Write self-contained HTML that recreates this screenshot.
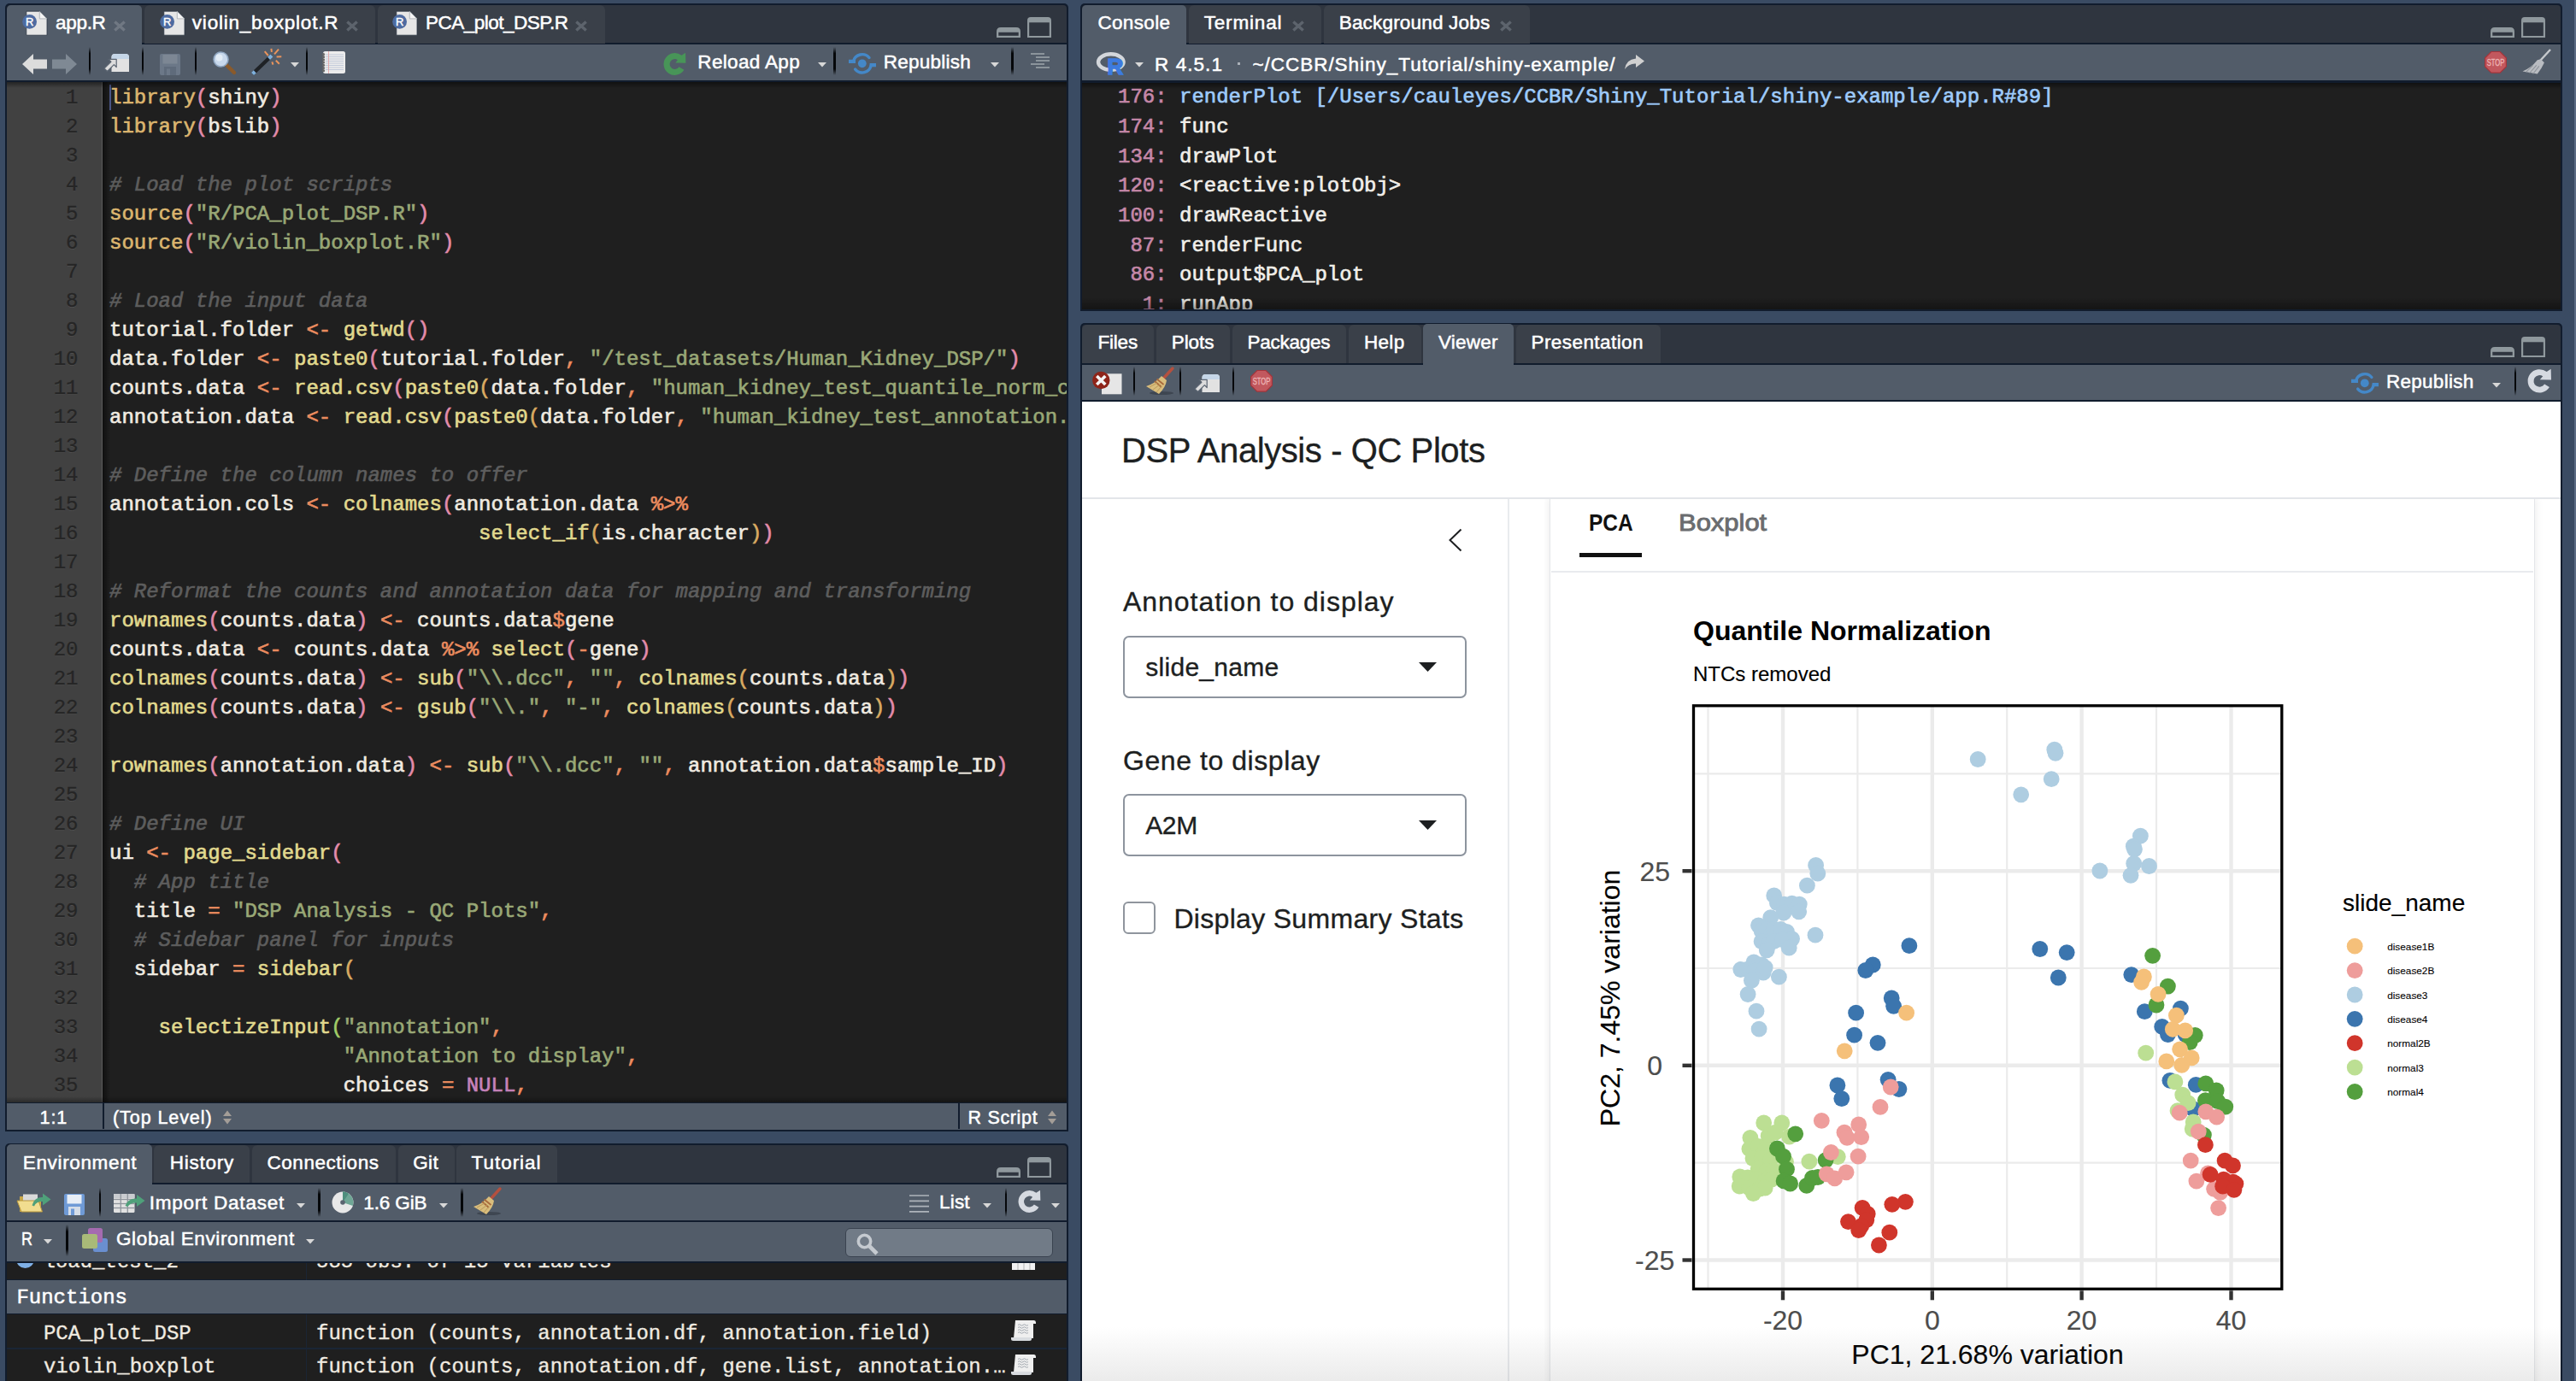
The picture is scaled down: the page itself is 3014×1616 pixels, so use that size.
<!DOCTYPE html>
<html><head><meta charset="utf-8"><title>RStudio</title><style>
html,body{margin:0;padding:0}
body{width:3014px;height:1616px;overflow:hidden;background:#3a4b63;position:relative;font-family:"Liberation Sans",sans-serif}
.t{position:absolute;white-space:pre;display:block;-webkit-text-stroke:.35px}
svg{position:absolute;overflow:visible}
.code{position:absolute;font:24px/34px "Liberation Mono",monospace;white-space:pre;color:#f0ebe1;-webkit-text-stroke:.65px}
.code i{font-style:italic;color:#5d5d5d}
.code b{font-weight:400}
.k{color:#dbb56f}.f{color:#e1d98e}.s{color:#99a876}.o{color:#ec8c5f}.p1{color:#e38cab}.p2{color:#d9aa62}.p3{color:#a0cc68}.n{color:#c682ba}.e{color:#99a876}
.ln{position:absolute;font:24px/34px "Liberation Mono",monospace;white-space:pre;color:#252525;text-align:right;-webkit-text-stroke:.3px;text-shadow:0 1px 0 rgba(255,255,255,.09)}
</style></head><body>
<div style="position:absolute;left:6.2px;top:4.0px;width:1243.6px;height:1319.6px;background:#111c2d;border-radius:5px 5px 0 0;"></div>
<div style="position:absolute;left:7.8px;top:6.0px;width:1240.0px;height:46.2px;background:#2f353f;border-radius:4px 4px 0 0;"></div>
<div style="position:absolute;left:7.8px;top:50.2px;width:1240.0px;height:2.5px;background:#111c2d;"></div>
<div style="position:absolute;left:7.8px;top:5.5px;width:158.7px;height:49.2px;background:#525c69;border-radius:5px 5px 0 0;"></div>
<div style="position:absolute;left:169.0px;top:6.0px;width:269.5px;height:44.7px;background:#3a4049;border-radius:6px 6px 0 0;"></div>
<div style="position:absolute;left:441.5px;top:6.0px;width:266.0px;height:44.7px;background:#3a4049;border-radius:6px 6px 0 0;"></div>
<div style="position:absolute;left:7.8px;top:52.2px;width:1240.0px;height:41.8px;background:#525c69;"></div>
<div style="position:absolute;left:7.8px;top:96.0px;width:1240.5px;height:1194.0px;background:#1f1f1f;"></div>
<div style="position:absolute;left:7.8px;top:96.0px;width:112.6px;height:1194.0px;background:#414141;border-right:1px solid #5a5a5a;box-sizing:border-box;"></div>
<div style="position:absolute;left:120.4px;top:96.0px;width:9.0px;height:1194.0px;background:linear-gradient(90deg,rgba(0,0,0,.5),rgba(0,0,0,0));"></div>
<div style="position:absolute;left:9px;top:96.5px;width:1239.300px;height:1193.5px;overflow:hidden"><div class="ln" style="left:0;top:1px;width:82.500px">1
2
3
4
5
6
7
8
9
10
11
12
13
14
15
16
17
18
19
20
21
22
23
24
25
26
27
28
29
30
31
32
33
34
35</div><div class="code" style="left:119px;top:1px"><b class="k">library</b><b class="p1">(</b>shiny<b class="p1">)</b>
<b class="k">library</b><b class="p1">(</b>bslib<b class="p1">)</b>

<i># Load the plot scripts</i>
<b class="k">source</b><b class="p1">(</b><b class="s">"R/PCA_plot_DSP.R"</b><b class="p1">)</b>
<b class="k">source</b><b class="p1">(</b><b class="s">"R/violin_boxplot.R"</b><b class="p1">)</b>

<i># Load the input data</i>
tutorial.folder <b class="o">&lt;-</b> <b class="f">getwd</b><b class="p1">(</b><b class="p1">)</b>
data.folder <b class="o">&lt;-</b> <b class="f">paste0</b><b class="p1">(</b>tutorial.folder<b class="o">,</b> <b class="s">"/test_datasets/Human_Kidney_DSP/"</b><b class="p1">)</b>
counts.data <b class="o">&lt;-</b> <b class="f">read.csv</b><b class="p1">(</b><b class="f">paste0</b><b class="p2">(</b>data.folder<b class="o">,</b> <b class="s">"human_kidney_test_quantile_norm_counts.csv"</b><b class="p2">)</b><b class="p1">)</b>
annotation.data <b class="o">&lt;-</b> <b class="f">read.csv</b><b class="p1">(</b><b class="f">paste0</b><b class="p2">(</b>data.folder<b class="o">,</b> <b class="s">"human_kidney_test_annotation.csv"</b><b class="p2">)</b><b class="p1">)</b>

<i># Define the column names to offer</i>
annotation.cols <b class="o">&lt;-</b> <b class="f">colnames</b><b class="p1">(</b>annotation.data <b class="o">%&gt;%</b>
                              <b class="f">select_if</b><b class="p2">(</b>is.character<b class="p2">)</b><b class="p1">)</b>

<i># Reformat the counts and annotation data for mapping and transforming</i>
<b class="f">rownames</b><b class="p1">(</b>counts.data<b class="p1">)</b> <b class="o">&lt;-</b> counts.data<b class="o">$</b>gene
counts.data <b class="o">&lt;-</b> counts.data <b class="o">%&gt;%</b> <b class="f">select</b><b class="p1">(</b><b class="o">-</b>gene<b class="p1">)</b>
<b class="f">colnames</b><b class="p1">(</b>counts.data<b class="p1">)</b> <b class="o">&lt;-</b> <b class="f">sub</b><b class="p1">(</b><b class="s">"</b><b class="e">\\</b><b class="s">.dcc"</b><b class="o">,</b> <b class="s">""</b><b class="o">,</b> <b class="f">colnames</b><b class="p2">(</b>counts.data<b class="p2">)</b><b class="p1">)</b>
<b class="f">colnames</b><b class="p1">(</b>counts.data<b class="p1">)</b> <b class="o">&lt;-</b> <b class="f">gsub</b><b class="p1">(</b><b class="s">"</b><b class="e">\\</b><b class="s">."</b><b class="o">,</b> <b class="s">"-"</b><b class="o">,</b> <b class="f">colnames</b><b class="p2">(</b>counts.data<b class="p2">)</b><b class="p1">)</b>

<b class="f">rownames</b><b class="p1">(</b>annotation.data<b class="p1">)</b> <b class="o">&lt;-</b> <b class="f">sub</b><b class="p1">(</b><b class="s">"</b><b class="e">\\</b><b class="s">.dcc"</b><b class="o">,</b> <b class="s">""</b><b class="o">,</b> annotation.data<b class="o">$</b>sample_ID<b class="p1">)</b>

<i># Define UI</i>
ui <b class="o">&lt;-</b> <b class="f">page_sidebar</b><b class="p1">(</b>
  <i># App title</i>
  title <b class="o">=</b> <b class="s">"DSP Analysis - QC Plots"</b><b class="o">,</b>
  <i># Sidebar panel for inputs</i>
  sidebar <b class="o">=</b> <b class="f">sidebar</b><b class="p2">(</b>

    <b class="f">selectizeInput</b><b class="p3">(</b><b class="s">"annotation"</b><b class="o">,</b>
                   <b class="s">"Annotation to display"</b><b class="o">,</b>
                   choices <b class="o">=</b> <b class="n">NULL</b><b class="o">,</b></div><div style="position:absolute;left:119px;top:2px;width:1.500px;height:30px;background:#4a5585"></div></div>
<div style="position:absolute;left:7.8px;top:96.0px;width:1240.5px;height:7.0px;background:linear-gradient(180deg,rgba(0,0,0,.45),rgba(0,0,0,0));"></div>
<div style="position:absolute;left:7.8px;top:1283.0px;width:1240.5px;height:7.0px;background:linear-gradient(180deg,rgba(0,0,0,0),rgba(0,0,0,.35));"></div>
<div style="position:absolute;left:7.8px;top:1290.0px;width:1240.5px;height:30.5px;background:#525c69;border-top:1.500px solid #111c2d;"></div>
<div style="position:absolute;left:120.0px;top:1291.0px;width:2.0px;height:30.0px;background:#111c2d;"></div>
<div style="position:absolute;left:1121.0px;top:1291.0px;width:2.0px;height:30.0px;background:#111c2d;"></div>
<span class="t" style="left:46.5px;top:1298.0px;font:normal 400 21.50px/1 'Liberation Sans',sans-serif;color:#ffffff;letter-spacing:0.970px;-webkit-text-stroke:.5px;">1:1</span>
<span class="t" style="left:132.0px;top:1298.0px;font:normal 400 21.50px/1 'Liberation Sans',sans-serif;color:#ffffff;letter-spacing:0.922px;-webkit-text-stroke:.5px;">(Top Level)</span>
<span class="t" style="left:1132.6px;top:1298.0px;font:normal 400 21.50px/1 'Liberation Sans',sans-serif;color:#ffffff;letter-spacing:0.654px;-webkit-text-stroke:.5px;">R Script</span>
<svg style="left:260.5px;top:1299.0px" width="10.0" height="17.0" viewBox="0 0 10 17"><path d="M0 7l5-6.500 5 6.500zM0 10l5 6.500 5-6.500z" fill="#a39d97"/></svg>
<svg style="left:1226.0px;top:1299.0px" width="10.0" height="17.0" viewBox="0 0 10 17"><path d="M0 7l5-6.500 5 6.500zM0 10l5 6.500 5-6.500z" fill="#a39d97"/></svg>
<svg style="left:26.0px;top:12.0px" width="30.0" height="33.0" viewBox="0 0 30 33"><path d="M4.800 1.200h15.500l8.700 8.700v19.300H4.800z" fill="#e6e6e6" stroke="#2c3644" stroke-width=".8"/><path d="M20.300 1.200v8.700h8.700z" fill="#f4f4f4" stroke="#9aa0a8" stroke-width=".7"/><circle cx="8.600" cy="13.400" r="8.400" fill="#4d6ba1"/><text x="8.600" y="18" font-family="Liberation Sans,sans-serif" font-weight="400" font-size="13" fill="#fff" stroke="#fff" stroke-width=".4" text-anchor="middle">R</text></svg>
<span class="t" style="left:65.1px;top:16.0px;font:normal 400 22.50px/1 'Liberation Sans',sans-serif;color:#ffffff;letter-spacing:-0.329px;-webkit-text-stroke:.5px;">app.R</span>
<svg style="left:133.2px;top:24.9px" width="14.0" height="11.0" viewBox="0 0 14 11"><path d="M1.300 0.500l11.400 10M12.700 0.500L1.300 10.500" stroke="#707883" stroke-width="3.400" stroke-linecap="butt"/></svg>
<svg style="left:187.0px;top:12.0px" width="30.0" height="33.0" viewBox="0 0 30 33"><path d="M4.800 1.200h15.500l8.700 8.700v19.300H4.800z" fill="#e6e6e6" stroke="#2c3644" stroke-width=".8"/><path d="M20.300 1.200v8.700h8.700z" fill="#f4f4f4" stroke="#9aa0a8" stroke-width=".7"/><circle cx="8.600" cy="13.400" r="8.400" fill="#4d6ba1"/><text x="8.600" y="18" font-family="Liberation Sans,sans-serif" font-weight="400" font-size="13" fill="#fff" stroke="#fff" stroke-width=".4" text-anchor="middle">R</text></svg>
<span class="t" style="left:224.8px;top:16.0px;font:normal 400 22.50px/1 'Liberation Sans',sans-serif;color:#ffffff;letter-spacing:0.791px;-webkit-text-stroke:.5px;">violin_boxplot.R</span>
<svg style="left:405.2px;top:24.9px" width="14.0" height="11.0" viewBox="0 0 14 11"><path d="M1.300 0.500l11.400 10M12.700 0.500L1.300 10.500" stroke="#5d646d" stroke-width="3.400" stroke-linecap="butt"/></svg>
<svg style="left:459.0px;top:12.0px" width="30.0" height="33.0" viewBox="0 0 30 33"><path d="M4.800 1.200h15.500l8.700 8.700v19.300H4.800z" fill="#e6e6e6" stroke="#2c3644" stroke-width=".8"/><path d="M20.300 1.200v8.700h8.700z" fill="#f4f4f4" stroke="#9aa0a8" stroke-width=".7"/><circle cx="8.600" cy="13.400" r="8.400" fill="#4d6ba1"/><text x="8.600" y="18" font-family="Liberation Sans,sans-serif" font-weight="400" font-size="13" fill="#fff" stroke="#fff" stroke-width=".4" text-anchor="middle">R</text></svg>
<span class="t" style="left:498.0px;top:16.0px;font:normal 400 22.50px/1 'Liberation Sans',sans-serif;color:#ffffff;letter-spacing:-0.503px;-webkit-text-stroke:.5px;">PCA_plot_DSP.R</span>
<svg style="left:672.7px;top:24.9px" width="14.0" height="11.0" viewBox="0 0 14 11"><path d="M1.300 0.500l11.400 10M12.700 0.500L1.300 10.500" stroke="#5d646d" stroke-width="3.400" stroke-linecap="butt"/></svg>
<svg style="left:1165.5px;top:20.0px" width="66.0" height="26.0" viewBox="0 0 66 26"><path d="M0 24v-7q0-5 5-5h18q5 0 5 5v7z" fill="#8f989d"/><rect x="2.300" y="17.800" width="23.400" height="4" fill="#2f353f"/><path d="M36 24V4q0-4 4-4h20q4 0 4 4v20z" fill="#8f989d"/><rect x="38.200" y="6.300" width="23.600" height="15.700" fill="#2f353f"/></svg>
<svg style="left:26.3px;top:62.5px" width="29.0" height="24.0" viewBox="0 0 29 24"><path d="M0 12L13 0v6.5h16v11H13V24z" fill="#dcdcdc"/></svg>
<svg style="left:61.2px;top:62.5px" width="29.0" height="24.0" viewBox="0 0 29 24"><path d="M29 12L16 0v6.5H0v11h16V24z" fill="#7f8994"/></svg>
<div style="position:absolute;left:103.8px;top:55.0px;width:2.4px;height:33.0px;background:linear-gradient(180deg,rgba(0,0,0,0),#05070a 22%,#05070a 78%,rgba(0,0,0,0))"></div>
<svg style="left:121.7px;top:63.4px" width="29.0" height="21.0" viewBox="0 0 29 21"><path d="M8.500 21V4q0-4 4-4h12.500q4 0 4 4v17z" fill="#e2e2e2"/><path d="M8.500 6V4q0-4 4-4h12.500q4 0 4 4v2z" fill="#c5d6e8"/><path d="M14.200 6.300H5l2.900 2.900L0 17l3.500 3.500 7.900-7.900 2.800 2.900z" fill="#dcdcdc" stroke="#5b6572" stroke-width="1.200" stroke-linejoin="round"/></svg>
<div style="position:absolute;left:165.7px;top:55.0px;width:2.4px;height:33.0px;background:linear-gradient(180deg,rgba(0,0,0,0),#05070a 22%,#05070a 78%,rgba(0,0,0,0))"></div>
<svg style="left:187.2px;top:62.8px" width="24.0" height="25.0" viewBox="0 0 24 25"><rect x="0" y="0" width="24" height="25" rx="2" fill="#6c7888"/><rect x="3.5" y="1" width="17" height="10.5" fill="#7d8794"/><rect x="5" y="15" width="14" height="10" fill="#5f6b7b"/><rect x="8" y="17.5" width="4" height="7.5" fill="#6c7888"/></svg>
<div style="position:absolute;left:227.8px;top:55.0px;width:2.4px;height:33.0px;background:linear-gradient(180deg,rgba(0,0,0,0),#05070a 22%,#05070a 78%,rgba(0,0,0,0))"></div>
<svg style="left:248.5px;top:60.0px" width="28.0" height="28.0" viewBox="0 0 28 28"><path d="M15 15l10 10" stroke="#8a5a2b" stroke-width="4.5" stroke-linecap="round"/><circle cx="9.5" cy="9.5" r="8.5" fill="#c9d9ec" stroke="#8fa6c0" stroke-width="1.6"/><circle cx="7.5" cy="7.5" r="4" fill="#eaf1f9" opacity=".8"/></svg>
<svg style="left:293.5px;top:56.5px" width="36.0" height="32.0" viewBox="0 0 36 32"><path d="M1.500 29.500L24 8" stroke="#1f2226" stroke-width="4.400" stroke-linecap="butt"/><path d="M1.500 29.500l2.800-2.700" stroke="#7fb0dc" stroke-width="4.400"/><path d="M20.500 11.300L24 8" stroke="#7fb0dc" stroke-width="4.400"/><g stroke="#e9945c" stroke-width="2"><path d="M15.700 3.100L19.800 8M23.400 -0.200L23.900 3.900M32 0.600L27.100 6.300M35.300 9.300L29.600 9.600M32.800 17.700L28.800 13.700M25.500 18.600L24.300 15.300"/></g></svg>
<svg style="left:339.7px;top:73.2px" width="10.0" height="5.5" viewBox="0 0 10 5.5"><path d="M0 0h10 l-5 5.5 z" fill="#d8d8d8"/></svg>
<div style="position:absolute;left:357.7px;top:55.0px;width:2.4px;height:33.0px;background:linear-gradient(180deg,rgba(0,0,0,0),#05070a 22%,#05070a 78%,rgba(0,0,0,0))"></div>
<svg style="left:375.8px;top:60.4px" width="28.0" height="26.0" viewBox="0 0 28 26"><rect x="2" y="0" width="26" height="26" rx="2.5" fill="#ececec"/><path d="M5 4 h21" stroke="#b7c2d6" stroke-width=".8"/><path d="M5 6.5 h21" stroke="#b7c2d6" stroke-width=".8"/><path d="M5 9 h21" stroke="#b7c2d6" stroke-width=".8"/><path d="M5 11.5 h21" stroke="#b7c2d6" stroke-width=".8"/><path d="M5 14 h21" stroke="#b7c2d6" stroke-width=".8"/><path d="M5 16.5 h21" stroke="#b7c2d6" stroke-width=".8"/><path d="M5 19 h21" stroke="#b7c2d6" stroke-width=".8"/><path d="M5 21.5 h21" stroke="#b7c2d6" stroke-width=".8"/><path d="M8.500 0v26" stroke="#e3a0a0" stroke-width=".8"/><circle cx="2.5" cy="3.5" r="1.6" fill="#666"/><circle cx="2.5" cy="6.7" r="1.6" fill="#666"/><circle cx="2.5" cy="9.9" r="1.6" fill="#666"/><circle cx="2.5" cy="13.1" r="1.6" fill="#666"/><circle cx="2.5" cy="16.3" r="1.6" fill="#666"/><circle cx="2.5" cy="19.5" r="1.6" fill="#666"/><circle cx="2.5" cy="22.7" r="1.6" fill="#666"/></svg>
<svg style="left:776.2px;top:61.3px" width="27.3" height="27.3" viewBox="0 0 29 29"><path d="M22.72 4.06A13.7 13.7 0 1 0 25.91 22.12L19.6 18.2A6.25 6.25 0 1 1 17.9 9.75L15.2 13.23L27.98 13.56L27.65 .68Z" fill="#489558"/></svg>
<span class="t" style="left:816.3px;top:61.7px;font:normal 400 22.50px/1 'Liberation Sans',sans-serif;color:#ffffff;letter-spacing:0.334px;-webkit-text-stroke:.5px;">Reload App</span>
<svg style="left:956.5px;top:73.2px" width="10.0" height="5.5" viewBox="0 0 10 5.5"><path d="M0 0h10 l-5 5.5 z" fill="#d8d8d8"/></svg>
<div style="position:absolute;left:975.3px;top:55.0px;width:2.4px;height:33.0px;background:linear-gradient(180deg,rgba(0,0,0,0),#05070a 22%,#05070a 78%,rgba(0,0,0,0))"></div>
<svg style="left:993.0px;top:61.9px" width="32.0" height="24.2" viewBox="0 0 32 24.2"><circle cx="15.800" cy="12.300" r="4.900" fill="#4488c8"/><g fill="none" stroke="#4488c8" stroke-width="3.400" stroke-linecap="round"><path d="M5.450 10A10.600 10.600 0 0 1 23.920 5.490"/><path d="M26.150 14.600A10.600 10.600 0 0 1 7.680 19.110"/></g><path d="M0 7.800h8v4.300H0zM24.600 12.100H32v4.100h-7.400z" fill="#4488c8"/></svg>
<span class="t" style="left:1033.8px;top:61.7px;font:normal 400 22.50px/1 'Liberation Sans',sans-serif;color:#ffffff;letter-spacing:0.236px;-webkit-text-stroke:.5px;">Republish</span>
<svg style="left:1158.5px;top:73.2px" width="10.0" height="5.5" viewBox="0 0 10 5.5"><path d="M0 0h10 l-5 5.5 z" fill="#d8d8d8"/></svg>
<div style="position:absolute;left:1183.3px;top:55.0px;width:2.4px;height:33.0px;background:linear-gradient(180deg,rgba(0,0,0,0),#05070a 22%,#05070a 78%,rgba(0,0,0,0))"></div>
<svg style="left:1205.9px;top:62.0px" width="23.0" height="18.0" viewBox="0 0 23 18"><g stroke="#8b949b" stroke-width="2"><path d="M0 1h16M6 5h16M6 9h16M0 13h16M6 17h16"/></g></svg>
<div style="position:absolute;left:1264.3px;top:4.0px;width:1733.5px;height:359.5px;background:#111c2d;border-radius:5px 5px 0 0;"></div>
<div style="position:absolute;left:1266.3px;top:6.0px;width:1729.5px;height:46.2px;background:#2f353f;border-radius:4px 4px 0 0;"></div>
<div style="position:absolute;left:1266.3px;top:50.2px;width:1729.5px;height:2.5px;background:#111c2d;"></div>
<div style="position:absolute;left:1266.0px;top:5.5px;width:122.0px;height:49.2px;background:#525c69;border-radius:5px 5px 0 0;"></div>
<div style="position:absolute;left:1390.5px;top:6.0px;width:155.5px;height:44.7px;background:#3a4049;border-radius:6px 6px 0 0;"></div>
<div style="position:absolute;left:1548.5px;top:6.0px;width:241.5px;height:44.7px;background:#3a4049;border-radius:6px 6px 0 0;"></div>
<div style="position:absolute;left:1266.3px;top:52.2px;width:1729.5px;height:41.8px;background:#525c69;"></div>
<div style="position:absolute;left:1266.0px;top:96.5px;width:1729.9px;height:265.5px;background:#1f1f1f;"></div>
<div style="position:absolute;left:1266px;top:96.500px;width:1729.900px;height:265.500px;overflow:hidden"><div class="code" style="left:42px;top:0.800px;line-height:34.640px"><b style="color:#c587a8">176:</b><b style="color:#9ecbfb"> renderPlot [/Users/cauleyes/CCBR/Shiny_Tutorial/shiny-example/app.R#89]</b>
<b style="color:#c587a8">174:</b><b style="color:#f1efea"> func</b>
<b style="color:#c587a8">134:</b><b style="color:#f1efea"> drawPlot</b>
<b style="color:#c587a8">120:</b><b style="color:#f1efea"> &lt;reactive:plotObj&gt;</b>
<b style="color:#c587a8">100:</b><b style="color:#f1efea"> drawReactive</b>
<b style="color:#c587a8"> 87:</b><b style="color:#f1efea"> renderFunc</b>
<b style="color:#c587a8"> 86:</b><b style="color:#f1efea"> output$PCA_plot</b>
<b style="color:#c587a8">  1:</b><b style="color:#f1efea"> runApp</b></div></div>
<div style="position:absolute;left:1266.0px;top:96.5px;width:1729.9px;height:7.0px;background:linear-gradient(180deg,rgba(0,0,0,.45),rgba(0,0,0,0));"></div>
<div style="position:absolute;left:1266.0px;top:348.0px;width:1729.9px;height:14.0px;background:linear-gradient(180deg,rgba(0,0,0,0),rgba(0,0,0,.35));"></div>
<span class="t" style="left:1284.4px;top:16.0px;font:normal 400 22.50px/1 'Liberation Sans',sans-serif;color:#ffffff;letter-spacing:0.348px;-webkit-text-stroke:.5px;">Console</span>
<span class="t" style="left:1408.7px;top:16.0px;font:normal 400 22.50px/1 'Liberation Sans',sans-serif;color:#ffffff;letter-spacing:0.834px;-webkit-text-stroke:.5px;">Terminal</span>
<svg style="left:1512.0px;top:24.9px" width="14.0" height="11.0" viewBox="0 0 14 11"><path d="M1.300 0.500l11.400 10M12.700 0.500L1.300 10.500" stroke="#5d646d" stroke-width="3.400" stroke-linecap="butt"/></svg>
<span class="t" style="left:1566.7px;top:16.0px;font:normal 400 22.50px/1 'Liberation Sans',sans-serif;color:#ffffff;letter-spacing:0.189px;-webkit-text-stroke:.5px;">Background Jobs</span>
<svg style="left:1755.0px;top:24.9px" width="14.0" height="11.0" viewBox="0 0 14 11"><path d="M1.300 0.500l11.400 10M12.700 0.500L1.300 10.500" stroke="#5d646d" stroke-width="3.400" stroke-linecap="butt"/></svg>
<svg style="left:2914.0px;top:19.5px" width="66.0" height="26.0" viewBox="0 0 66 26"><path d="M0 24v-7q0-5 5-5h18q5 0 5 5v7z" fill="#8f989d"/><rect x="2.300" y="17.800" width="23.400" height="4" fill="#2f353f"/><path d="M36 24V4q0-4 4-4h20q4 0 4 4v20z" fill="#8f989d"/><rect x="38.200" y="6.300" width="23.600" height="15.700" fill="#2f353f"/></svg>
<svg style="left:1281.5px;top:59.5px" width="36.0" height="28.0" viewBox="0 0 36 28"><ellipse cx="17.800" cy="12.600" rx="14.800" ry="9.300" fill="none" stroke="#d3d6db" stroke-width="4.400"/><text x="13.500" y="27.300" font-family="Liberation Sans,sans-serif" font-weight="700" font-size="26" fill="#3d7be0" stroke="#3d7be0" stroke-width="1.500">R</text></svg>
<svg style="left:1327.8px;top:73.0px" width="10.0" height="5.5" viewBox="0 0 10 5.5"><path d="M0 0h10 l-5 5.5 z" fill="#d8d8d8"/></svg>
<span class="t" style="left:1351.0px;top:64.8px;font:normal 400 22.50px/1 'Liberation Sans',sans-serif;color:#ffffff;letter-spacing:1.065px;-webkit-text-stroke:.5px;">R 4.5.1</span>
<div style="position:absolute;left:1447.5px;top:72.5px;width:3.6px;height:3.6px;background:#aab0b8;"></div>
<span class="t" style="left:1465.4px;top:64.8px;font:normal 400 22.50px/1 'Liberation Sans',sans-serif;color:#ffffff;letter-spacing:0.976px;-webkit-text-stroke:.5px;">~/CCBR/Shiny_Tutorial/shiny-example/</span>
<svg style="left:1900.5px;top:63.5px" width="23.0" height="18.0" viewBox="0 0 23 18"><path d="M13 0l10 7.500L13 15v-4.500Q5 10 0 17 1.500 5.500 13 4.500z" fill="#d0d0d0"/></svg>
<svg style="left:2907.0px;top:59.5px" width="26.0" height="26.0" viewBox="0 0 26 26"><polygon points="7.86392,0.5 18.1361,0.5 25.4,7.70534 25.4,17.8947 18.1361,25.1 7.86392,25.1 0.6,17.8947 0.6,7.70534" fill="#c2585e" stroke="#a3343b" stroke-width="1.200"/><text x="13" y="16.800" font-family="Liberation Sans,sans-serif" font-size="10.500" fill="#efb9b9" stroke="#efb9b9" stroke-width=".3" text-anchor="middle" textLength="20.500" lengthAdjust="spacingAndGlyphs">STOP</text></svg>
<svg style="left:2948.5px;top:56.8px" width="37.5" height="30.5" viewBox="0 0 34 30"><path d="M33 1L21 14" stroke="#c6c9cd" stroke-width="2.400"/><path d="M22 12l4 4q-3 7-8 13L1 26q10-4 17-13z" fill="#b9bcc1"/><path d="M5 27l8-8M9 28l8-9M13 29l7-9" stroke="#8d9299" stroke-width="1"/></svg>
<div style="position:absolute;left:1264.3px;top:377.5px;width:1733.5px;height:1262.5px;background:#111c2d;border-radius:5px 5px 0 0;"></div>
<div style="position:absolute;left:1266.3px;top:379.5px;width:1729.5px;height:47.0px;background:#2f353f;border-radius:4px 4px 0 0;"></div>
<div style="position:absolute;left:1266.3px;top:424.5px;width:1729.5px;height:2.5px;background:#111c2d;"></div>
<div style="position:absolute;left:1266.0px;top:379.5px;width:84.0px;height:45.5px;background:#3a4049;border-radius:6px 6px 0 0;"></div>
<div style="position:absolute;left:1352.5px;top:379.5px;width:86.5px;height:45.5px;background:#3a4049;border-radius:6px 6px 0 0;"></div>
<div style="position:absolute;left:1441.5px;top:379.5px;width:133.5px;height:45.5px;background:#3a4049;border-radius:6px 6px 0 0;"></div>
<div style="position:absolute;left:1577.5px;top:379.5px;width:85.0px;height:45.5px;background:#3a4049;border-radius:6px 6px 0 0;"></div>
<div style="position:absolute;left:1664.5px;top:379.0px;width:106.5px;height:50.0px;background:#525c69;border-radius:5px 5px 0 0;"></div>
<div style="position:absolute;left:1773.5px;top:379.5px;width:169.5px;height:45.5px;background:#3a4049;border-radius:6px 6px 0 0;"></div>
<div style="position:absolute;left:1266.3px;top:426.5px;width:1729.5px;height:41.5px;background:#525c69;"></div>
<span class="t" style="left:1284.4px;top:389.6px;font:normal 400 22.50px/1 'Liberation Sans',sans-serif;color:#ffffff;letter-spacing:-0.183px;-webkit-text-stroke:.5px;">Files</span>
<span class="t" style="left:1370.8px;top:389.6px;font:normal 400 22.50px/1 'Liberation Sans',sans-serif;color:#ffffff;letter-spacing:-0.106px;-webkit-text-stroke:.5px;">Plots</span>
<span class="t" style="left:1459.6px;top:389.6px;font:normal 400 22.50px/1 'Liberation Sans',sans-serif;color:#ffffff;letter-spacing:-0.264px;-webkit-text-stroke:.5px;">Packages</span>
<span class="t" style="left:1595.9px;top:389.6px;font:normal 400 22.50px/1 'Liberation Sans',sans-serif;color:#ffffff;letter-spacing:0.355px;-webkit-text-stroke:.5px;">Help</span>
<span class="t" style="left:1682.9px;top:389.6px;font:normal 400 22.50px/1 'Liberation Sans',sans-serif;color:#ffffff;letter-spacing:0.254px;-webkit-text-stroke:.5px;">Viewer</span>
<span class="t" style="left:1791.5px;top:389.6px;font:normal 400 22.50px/1 'Liberation Sans',sans-serif;color:#ffffff;letter-spacing:0.430px;-webkit-text-stroke:.5px;">Presentation</span>
<svg style="left:2914.0px;top:393.5px" width="66.0" height="26.0" viewBox="0 0 66 26"><path d="M0 24v-7q0-5 5-5h18q5 0 5 5v7z" fill="#8f989d"/><rect x="2.300" y="17.800" width="23.400" height="4" fill="#2f353f"/><path d="M36 24V4q0-4 4-4h20q4 0 4 4v20z" fill="#8f989d"/><rect x="38.200" y="6.300" width="23.600" height="15.700" fill="#2f353f"/></svg>
<svg style="left:1277.5px;top:433.5px" width="36.0" height="34.0" viewBox="0 0 36 34"><rect x="11" y="3.300" width="23.500" height="24" fill="#e6e6e6"/><circle cx="10.300" cy="11" r="10.200" fill="#8e2419"/><path d="M5.300 6l10 10M15.300 6l-10 10" stroke="#f4f4f4" stroke-width="3.600"/></svg>
<div style="position:absolute;left:1325.7px;top:429.0px;width:2.4px;height:34.0px;background:linear-gradient(180deg,rgba(0,0,0,0),#05070a 22%,#05070a 78%,rgba(0,0,0,0))"></div>
<svg style="left:1340.5px;top:430.0px" width="33.0" height="32.0" viewBox="0 0 33 32"><ellipse cx="18" cy="30" rx="14" ry="2" fill="#3e4651"/><path d="M31 1L20 13" stroke="#b4503f" stroke-width="3.400" stroke-linecap="round"/><path d="M18 10l6 5q-1 8-9 16L0 22q10-3 18-12z" fill="#d9bd7c"/><path d="M12.500 13.500l8 6.500M10 16l8 7" stroke="#a86a3c" stroke-width="1.800"/><path d="M4 23l9-5M8 26l8-6M12 29l6-7" stroke="#b99b5c" stroke-width="1"/></svg>
<div style="position:absolute;left:1379.6px;top:429.0px;width:2.4px;height:34.0px;background:linear-gradient(180deg,rgba(0,0,0,0),#05070a 22%,#05070a 78%,rgba(0,0,0,0))"></div>
<svg style="left:1397.5px;top:437.5px" width="29.0" height="21.0" viewBox="0 0 29 21"><path d="M8.500 21V4q0-4 4-4h12.500q4 0 4 4v17z" fill="#e2e2e2"/><path d="M8.500 6V4q0-4 4-4h12.500q4 0 4 4v2z" fill="#c5d6e8"/><path d="M14.200 6.300H5l2.900 2.900L0 17l3.500 3.500 7.900-7.900 2.800 2.900z" fill="#dcdcdc" stroke="#5b6572" stroke-width="1.200" stroke-linejoin="round"/></svg>
<div style="position:absolute;left:1441.7px;top:429.0px;width:2.4px;height:34.0px;background:linear-gradient(180deg,rgba(0,0,0,0),#05070a 22%,#05070a 78%,rgba(0,0,0,0))"></div>
<svg style="left:1463.0px;top:433.0px" width="26.0" height="26.0" viewBox="0 0 26 26"><polygon points="7.86392,0.5 18.1361,0.5 25.4,7.70534 25.4,17.8947 18.1361,25.1 7.86392,25.1 0.6,17.8947 0.6,7.70534" fill="#c2585e" stroke="#a3343b" stroke-width="1.200"/><text x="13" y="16.800" font-family="Liberation Sans,sans-serif" font-size="10.500" fill="#efb9b9" stroke="#efb9b9" stroke-width=".3" text-anchor="middle" textLength="20.500" lengthAdjust="spacingAndGlyphs">STOP</text></svg>
<svg style="left:2751.0px;top:435.9px" width="32.0" height="24.2" viewBox="0 0 32 24.2"><circle cx="15.800" cy="12.300" r="4.900" fill="#4488c8"/><g fill="none" stroke="#4488c8" stroke-width="3.400" stroke-linecap="round"><path d="M5.450 10A10.600 10.600 0 0 1 23.920 5.490"/><path d="M26.150 14.600A10.600 10.600 0 0 1 7.680 19.110"/></g><path d="M0 7.800h8v4.300H0zM24.600 12.100H32v4.100h-7.400z" fill="#4488c8"/></svg>
<span class="t" style="left:2792.0px;top:436.3px;font:normal 400 22.50px/1 'Liberation Sans',sans-serif;color:#ffffff;letter-spacing:0.269px;-webkit-text-stroke:.5px;">Republish</span>
<svg style="left:2916.0px;top:447.5px" width="10.0" height="5.5" viewBox="0 0 10 5.5"><path d="M0 0h10 l-5 5.5 z" fill="#d8d8d8"/></svg>
<div style="position:absolute;left:2941.8px;top:429.0px;width:2.4px;height:34.0px;background:linear-gradient(180deg,rgba(0,0,0,0),#05070a 22%,#05070a 78%,rgba(0,0,0,0))"></div>
<svg style="left:2957.0px;top:431.3px" width="29.0" height="29.0" viewBox="0 0 29 29"><path d="M22.72 4.06A13.7 13.7 0 1 0 25.91 22.12L20.1 18.49A6.85 6.85 0 1 1 18.22 9.25L14.78 13.23L27.98 13.56L27.65 .68Z" fill="#d6dae1"/></svg>
<div style="position:absolute;left:1266.0px;top:470.3px;width:1729.9px;height:1160.0px;background:#fff;"></div>
<span class="t" style="left:1312.0px;top:507.1px;font:normal 400 40.00px/1 'Liberation Sans',sans-serif;color:#1d1f21;letter-spacing:-0.412px;">DSP Analysis - QC Plots</span>
<div style="position:absolute;left:1266.0px;top:582.0px;width:1729.9px;height:2.0px;background:#e3e5e9;"></div>
<div style="position:absolute;left:1763.6px;top:584.0px;width:2.0px;height:1040.0px;background:#e9ebee;"></div>
<svg style="left:1694.0px;top:618.0px" width="18.0" height="28.0" viewBox="0 0 18 28"><path d="M15.500 1.500L2.500 14l13 12.500" fill="none" stroke="#1d1f21" stroke-width="2"/></svg>
<span class="t" style="left:1314.0px;top:687.9px;font:normal 400 32.00px/1 'Liberation Sans',sans-serif;color:#1d1f21;letter-spacing:0.972px;">Annotation to display</span>
<div style="position:absolute;left:1314.0px;top:744.0px;width:401.5px;height:72.5px;box-sizing:border-box;border:2px solid #8d949e;border-radius:7px;background:#fff;"></div>
<span class="t" style="left:1340.2px;top:765.8px;font:normal 400 30.00px/1 'Liberation Sans',sans-serif;color:#1d1f21;letter-spacing:0.296px;">slide_name</span>
<svg style="left:1659.5px;top:774.5px" width="21.0" height="11.0" viewBox="0 0 21 11"><path d="M0 0h21L10.500 11z" fill="#1d1f21"/></svg>
<span class="t" style="left:1314.0px;top:873.6px;font:normal 400 32.00px/1 'Liberation Sans',sans-serif;color:#1d1f21;letter-spacing:0.556px;">Gene to display</span>
<div style="position:absolute;left:1314.0px;top:929.0px;width:401.5px;height:72.5px;box-sizing:border-box;border:2px solid #8d949e;border-radius:7px;background:#fff;"></div>
<span class="t" style="left:1340.2px;top:950.8px;font:normal 400 30.00px/1 'Liberation Sans',sans-serif;color:#1d1f21;letter-spacing:-0.362px;">A2M</span>
<svg style="left:1659.5px;top:959.5px" width="21.0" height="11.0" viewBox="0 0 21 11"><path d="M0 0h21L10.500 11z" fill="#1d1f21"/></svg>
<div style="position:absolute;left:1314.0px;top:1055.0px;width:38.0px;height:38.0px;box-sizing:border-box;border:2px solid #8f959d;border-radius:6px;background:#fff;"></div>
<span class="t" style="left:1373.4px;top:1058.6px;font:normal 400 32.00px/1 'Liberation Sans',sans-serif;color:#1d1f21;letter-spacing:0.313px;">Display Summary Stats</span>
<div style="position:absolute;left:1790px;top:584px;width:1205px;height:1032px;overflow:hidden"><div style="position:absolute;left:22.500px;top:-2px;width:1153.500px;height:1050px;box-sizing:border-box;border:1.500px solid #e4e6e9;background:#fff;box-shadow:0 0 10px rgba(0,0,0,.09)"></div></div>
<div style="position:absolute;left:1766.5px;top:584.0px;width:40.0px;height:1040.0px;background:#fff;"></div>
<div style="position:absolute;left:1266.0px;top:584.0px;width:1729.5px;height:0.0px;"></div>
<span class="t" style="left:1858.9px;top:597.4px;font:normal 700 28.50px/1 'Liberation Sans',sans-serif;color:#111;transform-origin:0 50%;transform:scaleX(0.8606);-webkit-text-stroke:0;">PCA</span>
<div style="position:absolute;left:1848.0px;top:647.3px;width:73.0px;height:4.3px;background:#111;"></div>
<span class="t" style="left:1963.5px;top:597.4px;font:normal 400 28.50px/1 'Liberation Sans',sans-serif;color:#6a6c6f;transform-origin:0 50%;transform:scaleX(1.0856);-webkit-text-stroke:.9px #6a6c6f;">Boxplot</span>
<div style="position:absolute;left:1815.0px;top:668.0px;width:1149.0px;height:2.0px;background:#e9ebee;"></div>
<svg width="3014" height="1616" style="left:0;top:0" viewBox="0 0 3014 1616">
<rect x="1981.5" y="825.8" width="688.3" height="682.5" fill="#fff"/>
<line x1="1998.5" x2="1998.5" y1="825.8" y2="1508.3" stroke="#ebebeb" stroke-width="2.2"/>
<line x1="2173.4" x2="2173.4" y1="825.8" y2="1508.3" stroke="#ebebeb" stroke-width="2.2"/>
<line x1="2348.2" x2="2348.2" y1="825.8" y2="1508.3" stroke="#ebebeb" stroke-width="2.2"/>
<line x1="2523.0" x2="2523.0" y1="825.8" y2="1508.3" stroke="#ebebeb" stroke-width="2.2"/>
<line x1="1981.5" x2="2669.8" y1="905.3" y2="905.3" stroke="#ebebeb" stroke-width="2.2"/>
<line x1="1981.5" x2="2669.8" y1="1133.0" y2="1133.0" stroke="#ebebeb" stroke-width="2.2"/>
<line x1="1981.5" x2="2669.8" y1="1360.7" y2="1360.7" stroke="#ebebeb" stroke-width="2.2"/>
<line x1="2086.0" x2="2086.0" y1="825.8" y2="1508.3" stroke="#ebebeb" stroke-width="4.4"/>
<line x1="2260.8" x2="2260.8" y1="825.8" y2="1508.3" stroke="#ebebeb" stroke-width="4.4"/>
<line x1="2435.6" x2="2435.6" y1="825.8" y2="1508.3" stroke="#ebebeb" stroke-width="4.4"/>
<line x1="2610.5" x2="2610.5" y1="825.8" y2="1508.3" stroke="#ebebeb" stroke-width="4.4"/>
<line x1="1981.5" x2="2669.8" y1="1019.2" y2="1019.2" stroke="#ebebeb" stroke-width="4.4"/>
<line x1="1981.5" x2="2669.8" y1="1246.8" y2="1246.8" stroke="#ebebeb" stroke-width="4.4"/>
<line x1="1981.5" x2="2669.8" y1="1474.5" y2="1474.5" stroke="#ebebeb" stroke-width="4.4"/>
<g fill="#aecde1">
<circle cx="2124.6" cy="1012.4" r="9.4"/>
<circle cx="2126.8" cy="1022.2" r="9.4"/>
<circle cx="2114.4" cy="1036.2" r="9.4"/>
<circle cx="2075.7" cy="1047.9" r="9.4"/>
<circle cx="2079.4" cy="1056.7" r="9.4"/>
<circle cx="2087.5" cy="1058.1" r="9.4"/>
<circle cx="2096.6" cy="1057.1" r="9.4"/>
<circle cx="2105.3" cy="1058.1" r="9.4"/>
<circle cx="2104.7" cy="1066.8" r="9.4"/>
<circle cx="2086.9" cy="1068.2" r="9.4"/>
<circle cx="2071.7" cy="1073.7" r="9.4"/>
<circle cx="2057.5" cy="1082.8" r="9.4"/>
<circle cx="2061.1" cy="1089.5" r="9.4"/>
<circle cx="2067.2" cy="1087.5" r="9.4"/>
<circle cx="2075.3" cy="1087.5" r="9.4"/>
<circle cx="2083.4" cy="1087.5" r="9.4"/>
<circle cx="2090.5" cy="1090.5" r="9.4"/>
<circle cx="2096.6" cy="1098.6" r="9.4"/>
<circle cx="2124.0" cy="1094.2" r="9.4"/>
<circle cx="2061.1" cy="1101.7" r="9.4"/>
<circle cx="2069.2" cy="1105.7" r="9.4"/>
<circle cx="2075.3" cy="1101.7" r="9.4"/>
<circle cx="2085.4" cy="1099.6" r="9.4"/>
<circle cx="2093.2" cy="1109.2" r="9.4"/>
<circle cx="2067.2" cy="1111.8" r="9.4"/>
<circle cx="2052.0" cy="1126.0" r="9.4"/>
<circle cx="2061.1" cy="1129.0" r="9.4"/>
<circle cx="2036.8" cy="1134.5" r="9.4"/>
<circle cx="2044.9" cy="1134.1" r="9.4"/>
<circle cx="2053.0" cy="1136.1" r="9.4"/>
<circle cx="2063.1" cy="1138.2" r="9.4"/>
<circle cx="2065.2" cy="1132.1" r="9.4"/>
<circle cx="2081.4" cy="1143.2" r="9.4"/>
<circle cx="2049.4" cy="1147.3" r="9.4"/>
<circle cx="2045.1" cy="1163.5" r="9.4"/>
<circle cx="2055.0" cy="1183.2" r="9.4"/>
<circle cx="2058.1" cy="1204.1" r="9.4"/>
<circle cx="2403.8" cy="877.2" r="9.4"/>
<circle cx="2405.0" cy="881.3" r="9.4"/>
<circle cx="2400.2" cy="911.7" r="9.4"/>
<circle cx="2364.7" cy="929.8" r="9.4"/>
<circle cx="2504.4" cy="978.2" r="9.4"/>
<circle cx="2496.3" cy="990.2" r="9.4"/>
<circle cx="2497.5" cy="993.8" r="9.4"/>
<circle cx="2496.7" cy="1010.5" r="9.4"/>
<circle cx="2514.5" cy="1013.5" r="9.4"/>
<circle cx="2456.9" cy="1019.0" r="9.4"/>
<circle cx="2493.0" cy="1024.3" r="9.4"/>
<circle cx="2314.2" cy="888.5" r="9.4"/>
</g>
<g fill="#3b75ae">
<circle cx="2233.9" cy="1106.7" r="9.4"/>
<circle cx="2191.3" cy="1129.0" r="9.4"/>
<circle cx="2182.8" cy="1135.5" r="9.4"/>
<circle cx="2213.2" cy="1168.0" r="9.4"/>
<circle cx="2215.6" cy="1177.3" r="9.4"/>
<circle cx="2171.6" cy="1185.2" r="9.4"/>
<circle cx="2169.6" cy="1211.2" r="9.4"/>
<circle cx="2197.0" cy="1220.3" r="9.4"/>
<circle cx="2386.8" cy="1110.5" r="9.4"/>
<circle cx="2418.2" cy="1114.6" r="9.4"/>
<circle cx="2408.3" cy="1144.0" r="9.4"/>
<circle cx="2493.8" cy="1140.6" r="9.4"/>
<circle cx="2509.3" cy="1183.7" r="9.4"/>
<circle cx="2551.4" cy="1180.1" r="9.4"/>
<circle cx="2529.7" cy="1201.4" r="9.4"/>
<circle cx="2536.4" cy="1210.5" r="9.4"/>
<circle cx="2557.1" cy="1210.5" r="9.4"/>
<circle cx="2538.9" cy="1264.3" r="9.4"/>
<circle cx="2569.3" cy="1269.3" r="9.4"/>
<circle cx="2566.2" cy="1297.7" r="9.4"/>
<circle cx="2149.9" cy="1270.0" r="9.4"/>
<circle cx="2154.8" cy="1285.6" r="9.4"/>
<circle cx="2209.1" cy="1263.3" r="9.4"/>
<circle cx="2221.9" cy="1274.5" r="9.4"/>
</g>
<g fill="#bcdf93">
<circle cx="2510.7" cy="1232.2" r="9.4"/>
<circle cx="2544.9" cy="1265.9" r="9.4"/>
<circle cx="2553.7" cy="1281.1" r="9.4"/>
<circle cx="2560.2" cy="1290.6" r="9.4"/>
<circle cx="2548.0" cy="1299.7" r="9.4"/>
<circle cx="2566.2" cy="1312.9" r="9.4"/>
<circle cx="2565.2" cy="1321.0" r="9.4"/>
<circle cx="2063.7" cy="1314.0" r="9.4"/>
<circle cx="2084.8" cy="1314.0" r="9.4"/>
<circle cx="2047.9" cy="1331.3" r="9.4"/>
<circle cx="2069.2" cy="1329.2" r="9.4"/>
<circle cx="2077.3" cy="1325.2" r="9.4"/>
<circle cx="2093.6" cy="1330.2" r="9.4"/>
<circle cx="2046.9" cy="1344.4" r="9.4"/>
<circle cx="2057.1" cy="1341.4" r="9.4"/>
<circle cx="2065.2" cy="1345.4" r="9.4"/>
<circle cx="2051.0" cy="1355.6" r="9.4"/>
<circle cx="2061.1" cy="1355.6" r="9.4"/>
<circle cx="2071.3" cy="1357.6" r="9.4"/>
<circle cx="2089.5" cy="1359.6" r="9.4"/>
<circle cx="2057.1" cy="1367.8" r="9.4"/>
<circle cx="2067.2" cy="1369.8" r="9.4"/>
<circle cx="2075.3" cy="1369.8" r="9.4"/>
<circle cx="2035.8" cy="1376.9" r="9.4"/>
<circle cx="2044.9" cy="1377.9" r="9.4"/>
<circle cx="2055.0" cy="1379.9" r="9.4"/>
<circle cx="2065.2" cy="1381.9" r="9.4"/>
<circle cx="2073.3" cy="1379.9" r="9.4"/>
<circle cx="2035.2" cy="1388.0" r="9.4"/>
<circle cx="2046.9" cy="1390.1" r="9.4"/>
<circle cx="2059.1" cy="1391.1" r="9.4"/>
<circle cx="2065.2" cy="1390.1" r="9.4"/>
<circle cx="2051.4" cy="1396.5" r="9.4"/>
<circle cx="2116.9" cy="1359.2" r="9.4"/>
<circle cx="2150.3" cy="1353.6" r="9.4"/>
</g>
<g fill="#549f3e">
<circle cx="2518.6" cy="1118.3" r="9.4"/>
<circle cx="2536.4" cy="1154.1" r="9.4"/>
<circle cx="2523.0" cy="1176.0" r="9.4"/>
<circle cx="2568.3" cy="1211.5" r="9.4"/>
<circle cx="2562.2" cy="1219.6" r="9.4"/>
<circle cx="2580.8" cy="1267.9" r="9.4"/>
<circle cx="2593.2" cy="1276.0" r="9.4"/>
<circle cx="2580.4" cy="1287.6" r="9.4"/>
<circle cx="2594.6" cy="1288.6" r="9.4"/>
<circle cx="2603.8" cy="1295.1" r="9.4"/>
<circle cx="2578.4" cy="1328.1" r="9.4"/>
<circle cx="2100.7" cy="1326.8" r="9.4"/>
<circle cx="2079.4" cy="1344.0" r="9.4"/>
<circle cx="2086.5" cy="1353.2" r="9.4"/>
<circle cx="2090.5" cy="1368.2" r="9.4"/>
<circle cx="2087.1" cy="1381.9" r="9.4"/>
<circle cx="2094.6" cy="1385.0" r="9.4"/>
<circle cx="2113.8" cy="1387.4" r="9.4"/>
<circle cx="2120.5" cy="1378.5" r="9.4"/>
<circle cx="2127.0" cy="1377.5" r="9.4"/>
<circle cx="2136.1" cy="1357.6" r="9.4"/>
</g>
<g fill="#f5c07a">
<circle cx="2230.6" cy="1185.2" r="9.4"/>
<circle cx="2158.2" cy="1229.8" r="9.4"/>
<circle cx="2508.4" cy="1143.0" r="9.4"/>
<circle cx="2505.6" cy="1149.3" r="9.4"/>
<circle cx="2525.1" cy="1163.3" r="9.4"/>
<circle cx="2546.4" cy="1188.2" r="9.4"/>
<circle cx="2542.3" cy="1204.4" r="9.4"/>
<circle cx="2556.7" cy="1205.9" r="9.4"/>
<circle cx="2550.6" cy="1227.8" r="9.4"/>
<circle cx="2564.2" cy="1237.9" r="9.4"/>
<circle cx="2534.8" cy="1241.9" r="9.4"/>
<circle cx="2552.7" cy="1246.4" r="9.4"/>
</g>
<g fill="#ee9d9b">
<circle cx="2550.2" cy="1302.2" r="9.4"/>
<circle cx="2580.8" cy="1300.8" r="9.4"/>
<circle cx="2593.6" cy="1307.2" r="9.4"/>
<circle cx="2572.3" cy="1324.1" r="9.4"/>
<circle cx="2563.2" cy="1358.1" r="9.4"/>
<circle cx="2569.9" cy="1382.1" r="9.4"/>
<circle cx="2583.5" cy="1373.0" r="9.4"/>
<circle cx="2590.6" cy="1391.3" r="9.4"/>
<circle cx="2597.7" cy="1395.3" r="9.4"/>
<circle cx="2595.6" cy="1413.6" r="9.4"/>
<circle cx="2212.2" cy="1272.0" r="9.4"/>
<circle cx="2200.0" cy="1295.4" r="9.4"/>
<circle cx="2131.3" cy="1311.4" r="9.4"/>
<circle cx="2174.7" cy="1316.0" r="9.4"/>
<circle cx="2158.0" cy="1325.2" r="9.4"/>
<circle cx="2161.1" cy="1331.3" r="9.4"/>
<circle cx="2177.7" cy="1330.6" r="9.4"/>
<circle cx="2142.4" cy="1348.5" r="9.4"/>
<circle cx="2174.1" cy="1353.2" r="9.4"/>
<circle cx="2137.2" cy="1373.8" r="9.4"/>
<circle cx="2146.7" cy="1378.9" r="9.4"/>
<circle cx="2160.1" cy="1371.8" r="9.4"/>
</g>
<g fill="#d0352b">
<circle cx="2580.4" cy="1339.7" r="9.4"/>
<circle cx="2603.1" cy="1358.2" r="9.4"/>
<circle cx="2612.5" cy="1363.9" r="9.4"/>
<circle cx="2586.1" cy="1374.4" r="9.4"/>
<circle cx="2601.7" cy="1380.1" r="9.4"/>
<circle cx="2612.9" cy="1383.1" r="9.4"/>
<circle cx="2615.9" cy="1385.2" r="9.4"/>
<circle cx="2600.7" cy="1388.2" r="9.4"/>
<circle cx="2613.9" cy="1392.3" r="9.4"/>
<circle cx="2229.4" cy="1406.3" r="9.4"/>
<circle cx="2213.8" cy="1409.3" r="9.4"/>
<circle cx="2179.1" cy="1413.4" r="9.4"/>
<circle cx="2185.2" cy="1420.5" r="9.4"/>
<circle cx="2183.8" cy="1427.6" r="9.4"/>
<circle cx="2162.5" cy="1429.6" r="9.4"/>
<circle cx="2177.7" cy="1434.7" r="9.4"/>
<circle cx="2174.7" cy="1439.7" r="9.4"/>
<circle cx="2210.8" cy="1442.2" r="9.4"/>
<circle cx="2198.4" cy="1457.0" r="9.4"/>
</g>
<rect x="1981.5" y="825.8" width="688.3" height="682.5" fill="none" stroke="#000" stroke-width="3.300"/>
<line x1="2086.0" x2="2086.0" y1="1510.3" y2="1521.3" stroke="#333" stroke-width="4.4"/>
<line x1="2260.8" x2="2260.8" y1="1510.3" y2="1521.3" stroke="#333" stroke-width="4.4"/>
<line x1="2435.6" x2="2435.6" y1="1510.3" y2="1521.3" stroke="#333" stroke-width="4.4"/>
<line x1="2610.5" x2="2610.5" y1="1510.3" y2="1521.3" stroke="#333" stroke-width="4.4"/>
<line x1="1968.5" x2="1979.5" y1="1019.2" y2="1019.2" stroke="#333" stroke-width="4.4"/>
<line x1="1968.5" x2="1979.5" y1="1246.8" y2="1246.8" stroke="#333" stroke-width="4.4"/>
<line x1="1968.5" x2="1979.5" y1="1474.5" y2="1474.5" stroke="#333" stroke-width="4.4"/>
<circle cx="2755.2" cy="1107.2" r="9.4" fill="#f5c07a"/>
<circle cx="2755.2" cy="1135.6" r="9.4" fill="#ee9d9b"/>
<circle cx="2755.2" cy="1164.0" r="9.4" fill="#aecde1"/>
<circle cx="2755.2" cy="1192.3" r="9.4" fill="#3b75ae"/>
<circle cx="2755.2" cy="1220.7" r="9.4" fill="#d0352b"/>
<circle cx="2755.2" cy="1249.1" r="9.4" fill="#bcdf93"/>
<circle cx="2755.2" cy="1277.5" r="9.4" fill="#549f3e"/>
</svg>
<span class="t" style="left:1981.0px;top:721.6px;font:normal 700 32.00px/1 'Liberation Sans',sans-serif;color:#000;-webkit-text-stroke:0;">Quantile Normalization</span>
<span class="t" style="left:1981.0px;top:777.4px;font:normal 400 24.00px/1 'Liberation Sans',sans-serif;color:#000;-webkit-text-stroke:.15px;">NTCs removed</span>
<span class="t" style="left:1686.0px;top:1528.7px;font:normal 400 32.00px/1 'Liberation Sans',sans-serif;color:#4d4d4d;width:800px;text-align:center;-webkit-text-stroke:.15px;">-20</span>
<span class="t" style="left:1860.8px;top:1528.7px;font:normal 400 32.00px/1 'Liberation Sans',sans-serif;color:#4d4d4d;width:800px;text-align:center;-webkit-text-stroke:.15px;">0</span>
<span class="t" style="left:2035.6px;top:1528.7px;font:normal 400 32.00px/1 'Liberation Sans',sans-serif;color:#4d4d4d;width:800px;text-align:center;-webkit-text-stroke:.15px;">20</span>
<span class="t" style="left:2210.5px;top:1528.7px;font:normal 400 32.00px/1 'Liberation Sans',sans-serif;color:#4d4d4d;width:800px;text-align:center;-webkit-text-stroke:.15px;">40</span>
<span class="t" style="left:1736.2px;top:1003.6px;font:normal 400 32.00px/1 'Liberation Sans',sans-serif;color:#4d4d4d;width:400px;text-align:center;-webkit-text-stroke:.15px;">25</span>
<span class="t" style="left:1736.2px;top:1231.2px;font:normal 400 32.00px/1 'Liberation Sans',sans-serif;color:#4d4d4d;width:400px;text-align:center;-webkit-text-stroke:.15px;">0</span>
<span class="t" style="left:1736.2px;top:1458.9px;font:normal 400 32.00px/1 'Liberation Sans',sans-serif;color:#4d4d4d;width:400px;text-align:center;-webkit-text-stroke:.15px;">-25</span>
<span class="t" style="left:1825.5px;top:1568.9px;font:normal 400 32.00px/1 'Liberation Sans',sans-serif;color:#000;width:1000px;text-align:center;-webkit-text-stroke:.15px;">PC1, 21.68% variation</span>
<span class="t" style="left:1884px;top:1167.500px;font:32px/1 'Liberation Sans',sans-serif;color:#000;-webkit-text-stroke:.15px;transform:translate(-50%,-50%) rotate(-90deg);transform-origin:50% 50%">PC2, 7.45% variation</span>
<span class="t" style="left:2741.0px;top:1043.3px;font:normal 400 28.00px/1 'Liberation Sans',sans-serif;color:#000;-webkit-text-stroke:.15px;">slide_name</span>
<span class="t" style="left:2793.2px;top:1102.7px;font:normal 400 11.80px/1 'Liberation Sans',sans-serif;color:#000;-webkit-text-stroke:.1px;">disease1B</span>
<span class="t" style="left:2793.2px;top:1131.1px;font:normal 400 11.80px/1 'Liberation Sans',sans-serif;color:#000;-webkit-text-stroke:.1px;">disease2B</span>
<span class="t" style="left:2793.2px;top:1159.5px;font:normal 400 11.80px/1 'Liberation Sans',sans-serif;color:#000;-webkit-text-stroke:.1px;">disease3</span>
<span class="t" style="left:2793.2px;top:1187.8px;font:normal 400 11.80px/1 'Liberation Sans',sans-serif;color:#000;-webkit-text-stroke:.1px;">disease4</span>
<span class="t" style="left:2793.2px;top:1216.2px;font:normal 400 11.80px/1 'Liberation Sans',sans-serif;color:#000;-webkit-text-stroke:.1px;">normal2B</span>
<span class="t" style="left:2793.2px;top:1244.6px;font:normal 400 11.80px/1 'Liberation Sans',sans-serif;color:#000;-webkit-text-stroke:.1px;">normal3</span>
<span class="t" style="left:2793.2px;top:1273.0px;font:normal 400 11.80px/1 'Liberation Sans',sans-serif;color:#000;-webkit-text-stroke:.1px;">normal4</span>
<div style="position:absolute;left:1266.0px;top:1552.0px;width:1729.9px;height:64.0px;background:linear-gradient(180deg,rgba(100,100,100,0),rgba(100,100,100,.13));"></div>
<div style="position:absolute;left:6.2px;top:1337.6px;width:1243.6px;height:302.4px;background:#111c2d;border-radius:5px 5px 0 0;"></div>
<div style="position:absolute;left:7.8px;top:1339.6px;width:1240.0px;height:46.3px;background:#2f353f;border-radius:4px 4px 0 0;"></div>
<div style="position:absolute;left:7.8px;top:1383.9px;width:1240.0px;height:2.5px;background:#111c2d;"></div>
<div style="position:absolute;left:7.8px;top:1339.1px;width:170.2px;height:49.3px;background:#525c69;border-radius:5px 5px 0 0;"></div>
<div style="position:absolute;left:180.0px;top:1339.6px;width:112.4px;height:44.8px;background:#3a4049;border-radius:6px 6px 0 0;"></div>
<div style="position:absolute;left:294.5px;top:1339.6px;width:168.9px;height:44.8px;background:#3a4049;border-radius:6px 6px 0 0;"></div>
<div style="position:absolute;left:465.5px;top:1339.6px;width:66.2px;height:44.8px;background:#3a4049;border-radius:6px 6px 0 0;"></div>
<div style="position:absolute;left:534.0px;top:1339.6px;width:118.0px;height:44.8px;background:#3a4049;border-radius:6px 6px 0 0;"></div>
<div style="position:absolute;left:7.8px;top:1385.9px;width:1240.0px;height:42.1px;background:#525c69;"></div>
<div style="position:absolute;left:7.8px;top:1428.0px;width:1240.5px;height:2.0px;background:#111c2d;"></div>
<div style="position:absolute;left:7.8px;top:1430.0px;width:1240.5px;height:45.5px;background:#525c69;"></div>
<div style="position:absolute;left:7.8px;top:1475.5px;width:1240.5px;height:2.0px;background:#111c2d;"></div>
<span class="t" style="left:26.8px;top:1350.2px;font:normal 400 22.50px/1 'Liberation Sans',sans-serif;color:#ffffff;letter-spacing:0.644px;-webkit-text-stroke:.5px;">Environment</span>
<span class="t" style="left:198.8px;top:1350.2px;font:normal 400 22.50px/1 'Liberation Sans',sans-serif;color:#ffffff;letter-spacing:0.741px;-webkit-text-stroke:.5px;">History</span>
<span class="t" style="left:312.5px;top:1350.2px;font:normal 400 22.50px/1 'Liberation Sans',sans-serif;color:#ffffff;letter-spacing:0.537px;-webkit-text-stroke:.5px;">Connections</span>
<span class="t" style="left:483.2px;top:1350.2px;font:normal 400 22.50px/1 'Liberation Sans',sans-serif;color:#ffffff;letter-spacing:0.345px;-webkit-text-stroke:.5px;">Git</span>
<span class="t" style="left:551.6px;top:1350.2px;font:normal 400 22.50px/1 'Liberation Sans',sans-serif;color:#ffffff;letter-spacing:0.962px;-webkit-text-stroke:.5px;">Tutorial</span>
<svg style="left:1166.0px;top:1354.0px" width="66.0" height="26.0" viewBox="0 0 66 26"><path d="M0 24v-7q0-5 5-5h18q5 0 5 5v7z" fill="#8f989d"/><rect x="2.300" y="17.800" width="23.400" height="4" fill="#2f353f"/><path d="M36 24V4q0-4 4-4h20q4 0 4 4v20z" fill="#8f989d"/><rect x="38.200" y="6.300" width="23.600" height="15.700" fill="#2f353f"/></svg>
<svg style="left:20.0px;top:1391.5px" width="40.0" height="30.0" viewBox="0 0 40 30"><path d="M3 8h9l3 3h13v15H3z" fill="#c7a649"/><path d="M7 5.500h17v12H7z" fill="#d9d9d9"/><path d="M0 13h25l4.500 13H5z" fill="#f1dd8f" stroke="#b9973c" stroke-width="1"/><path d="M17.500 18.500Q20 8.500 30 9V4.500l9.500 7-9.500 7V14Q22.500 13.500 20 19.500z" fill="#4fa07a"/></svg>
<svg style="left:75.0px;top:1396.5px" width="24.0" height="25.0" viewBox="0 0 24 25"><rect x="0" y="0" width="24" height="25" rx="2" fill="#6f9ad6"/><rect x="3.5" y="1" width="17" height="10.5" fill="#e8eef6"/><rect x="5" y="15" width="14" height="10" fill="#d5dde8"/><rect x="8" y="17.5" width="4" height="7.5" fill="#6f9ad6"/></svg>
<div style="position:absolute;left:115.8px;top:1390.0px;width:2.4px;height:34.0px;background:linear-gradient(180deg,rgba(0,0,0,0),#05070a 22%,#05070a 78%,rgba(0,0,0,0))"></div>
<svg style="left:132.5px;top:1397.0px" width="38.0" height="24.0" viewBox="0 0 38 24"><rect x="0" y="0" width="24.500" height="22" rx="1.500" fill="#e2e2e2"/><rect x="0" y="0" width="24.500" height="5" fill="#c9ccd0"/><path d="M0 6.5h24.500" stroke="#8f959c" stroke-width="1.300"/><path d="M0 11.5h24.500" stroke="#8f959c" stroke-width="1.300"/><path d="M0 16.5h24.500" stroke="#8f959c" stroke-width="1.300"/><path d="M8.3 0v22" stroke="#8f959c" stroke-width="1.300"/><path d="M16.3 0v22" stroke="#8f959c" stroke-width="1.300"/><path d="M13.500 14Q16.500 5 27 5.500V1l9.500 7-9.500 7v-4.500Q19.500 10 16.500 15z" fill="#4fa07a"/></svg>
<span class="t" style="left:174.7px;top:1396.7px;font:normal 400 22.50px/1 'Liberation Sans',sans-serif;color:#ffffff;letter-spacing:0.767px;-webkit-text-stroke:.5px;">Import Dataset</span>
<svg style="left:346.5px;top:1407.5px" width="10.0" height="5.5" viewBox="0 0 10 5.5"><path d="M0 0h10 l-5 5.5 z" fill="#d8d8d8"/></svg>
<div style="position:absolute;left:372.3px;top:1390.0px;width:2.4px;height:34.0px;background:linear-gradient(180deg,rgba(0,0,0,0),#05070a 22%,#05070a 78%,rgba(0,0,0,0))"></div>
<svg style="left:387.5px;top:1394.0px" width="26.0" height="26.0" viewBox="0 0 26 26"><circle cx="13" cy="13" r="12.500" fill="#e8e8e8"/><path d="M13 13L13 0.500A12.500 12.500 0 0 1 24.800 17z" fill="#6fa695"/><path d="M13 13L13 0.500A12.500 12.500 0 0 1 20 2.700z" fill="#4f8f7d"/><circle cx="13" cy="13" r="2.800" fill="#5a6470"/></svg>
<span class="t" style="left:425.3px;top:1396.7px;font:normal 400 22.50px/1 'Liberation Sans',sans-serif;color:#ffffff;letter-spacing:-0.135px;-webkit-text-stroke:.5px;">1.6 GiB</span>
<svg style="left:513.5px;top:1407.5px" width="10.0" height="5.5" viewBox="0 0 10 5.5"><path d="M0 0h10 l-5 5.5 z" fill="#d8d8d8"/></svg>
<div style="position:absolute;left:539.3px;top:1390.0px;width:2.4px;height:34.0px;background:linear-gradient(180deg,rgba(0,0,0,0),#05070a 22%,#05070a 78%,rgba(0,0,0,0))"></div>
<svg style="left:554.0px;top:1389.5px" width="33.0" height="32.0" viewBox="0 0 33 32"><ellipse cx="18" cy="30" rx="14" ry="2" fill="#3e4651"/><path d="M31 1L20 13" stroke="#b4503f" stroke-width="3.400" stroke-linecap="round"/><path d="M18 10l6 5q-1 8-9 16L0 22q10-3 18-12z" fill="#d9bd7c"/><path d="M12.500 13.500l8 6.500M10 16l8 7" stroke="#a86a3c" stroke-width="1.800"/><path d="M4 23l9-5M8 26l8-6M12 29l6-7" stroke="#b99b5c" stroke-width="1"/></svg>
<svg style="left:1063.5px;top:1397.5px" width="23.0" height="21.0" viewBox="0 0 23 21"><g stroke="#aeb4bb" stroke-width="1.700"><path d="M0 1h23M0 7.300h23M0 13.600h23M0 19.900h23"/></g></svg>
<span class="t" style="left:1099.0px;top:1396.4px;font:normal 400 22.50px/1 'Liberation Sans',sans-serif;color:#ffffff;letter-spacing:0.196px;-webkit-text-stroke:.5px;">List</span>
<svg style="left:1150.0px;top:1407.5px" width="10.0" height="5.5" viewBox="0 0 10 5.5"><path d="M0 0h10 l-5 5.5 z" fill="#d8d8d8"/></svg>
<div style="position:absolute;left:1175.8px;top:1390.0px;width:2.4px;height:34.0px;background:linear-gradient(180deg,rgba(0,0,0,0),#05070a 22%,#05070a 78%,rgba(0,0,0,0))"></div>
<svg style="left:1190.8px;top:1392.3px" width="27.3" height="27.3" viewBox="0 0 29 29"><path d="M22.72 4.06A13.7 13.7 0 1 0 25.91 22.12L20.1 18.49A6.85 6.85 0 1 1 18.22 9.25L14.78 13.23L27.98 13.56L27.65 .68Z" fill="#d6dae1"/></svg>
<svg style="left:1230.0px;top:1407.5px" width="10.0" height="5.5" viewBox="0 0 10 5.5"><path d="M0 0h10 l-5 5.5 z" fill="#d8d8d8"/></svg>
<span class="t" style="left:24.8px;top:1439.2px;font:normal 400 22.50px/1 'Liberation Sans',sans-serif;color:#ffffff;transform-origin:0 50%;transform:scaleX(0.8000);-webkit-text-stroke:.5px;">R</span>
<svg style="left:51.0px;top:1450.0px" width="10.0" height="5.5" viewBox="0 0 10 5.5"><path d="M0 0h10 l-5 5.5 z" fill="#d8d8d8"/></svg>
<div style="position:absolute;left:77.3px;top:1433.0px;width:2.4px;height:37.0px;background:linear-gradient(180deg,rgba(0,0,0,0),#05070a 22%,#05070a 78%,rgba(0,0,0,0))"></div>
<svg style="left:96.0px;top:1437.0px" width="31.0" height="29.0" viewBox="0 0 31 29"><rect x="13" y="12" width="17" height="16" rx="2.500" fill="#6a8fd0"/><rect x="7" y="0" width="17" height="17" rx="2.500" fill="#a56bb0"/><rect x="0" y="7" width="18" height="17" rx="2.500" fill="#a9ba78"/></svg>
<span class="t" style="left:136.0px;top:1439.2px;font:normal 400 22.50px/1 'Liberation Sans',sans-serif;color:#ffffff;letter-spacing:0.622px;-webkit-text-stroke:.5px;">Global Environment</span>
<svg style="left:358.0px;top:1450.0px" width="10.0" height="5.5" viewBox="0 0 10 5.5"><path d="M0 0h10 l-5 5.5 z" fill="#d8d8d8"/></svg>
<div style="position:absolute;left:988.5px;top:1437.0px;width:243.0px;height:34.0px;box-sizing:border-box;background:#717b87;border:1.500px solid #3a4350;border-radius:6px;"></div>
<svg style="left:1001.5px;top:1442.5px" width="26.0" height="26.0" viewBox="0 0 26 26"><circle cx="9.500" cy="9.500" r="7.200" fill="none" stroke="#c5cad0" stroke-width="3.600"/><path d="M15 15l9 9" stroke="#c5cad0" stroke-width="4.600"/></svg>
<div style="position:absolute;left:7.8px;top:1477.5px;width:1240.5px;height:160.0px;background:#1f1f1f;"></div>
<div style="position:absolute;left:7.8px;top:1497.0px;width:1240.5px;height:40.5px;background:#525c69;border-top:1.500px solid #111c2d;border-bottom:1.500px solid #111c2d;box-sizing:border-box;"></div>
<div style="position:absolute;left:357.5px;top:1477.5px;width:1.5px;height:20.0px;background:#1a2535;"></div>
<div style="position:absolute;left:357.5px;top:1537.5px;width:1.5px;height:90.0px;background:#1a2535;"></div>
<div style="position:absolute;left:7.8px;top:1577.0px;width:1240.5px;height:1.5px;background:#1a2535;"></div>
<div style="position:absolute;left:9px;top:1477.500px;width:1238.500px;height:19.500px;overflow:hidden"><span class="t" style="left:41.500px;top:-12.500px;font:24px/1 'Liberation Mono',monospace;color:#f0ebe1">load_test_2</span><span class="t" style="left:361px;top:-12.500px;font:24px/1 'Liberation Mono',monospace;color:#f0ebe1">585 obs. of 15 variables</span><div style="position:absolute;left:10px;top:-14.500px;width:21px;height:21px;border-radius:50%;background:#7fb0e6"></div></div>
<svg style="left:1184.0px;top:1477.5px" width="27.0" height="8.0" viewBox="0 0 27 8"><rect width="27" height="8" fill="#f2f2f2"/><path d="M7 0v8M14 0v8M21 0v8" stroke="#b5b5b5" stroke-width="1"/></svg>
<span class="t" style="left:19.4px;top:1506.6px;font:normal 400 24.00px/1 'Liberation Mono',monospace;color:#ffffff;-webkit-text-stroke:.5px;">Functions</span>
<span class="t" style="left:50.9px;top:1548.6px;font:normal 400 24.00px/1 'Liberation Mono',monospace;color:#f0ebe1;">PCA_plot_DSP</span>
<span class="t" style="left:370.0px;top:1548.6px;font:normal 400 24.00px/1 'Liberation Mono',monospace;color:#f0ebe1;">function (counts, annotation.df, annotation.field)</span>
<span class="t" style="left:50.9px;top:1588.3px;font:normal 400 24.00px/1 'Liberation Mono',monospace;color:#f0ebe1;">violin_boxplot</span>
<span class="t" style="left:370.0px;top:1588.3px;font:normal 400 24.00px/1 'Liberation Mono',monospace;color:#f0ebe1;">function (counts, annotation.df, gene.list, annotation.…</span>
<svg style="left:1182.5px;top:1544.5px" width="29.0" height="24.0" viewBox="0 0 29 24"><path d="M5 0h22q2 0 2 2.500v1.500h-3v17H3z" fill="#efefef"/><path d="M0 20h24v1.500q0 2.500-2.500 2.500H2.500Q0 24 0 21.500z" fill="#d9dce0"/><path d="M8 5.5q1.500-1.500 3 0t3 0 3 0 3 0" fill="none" stroke="#9aa0a8" stroke-width=".9"/><path d="M8 8.5q1.500-1.500 3 0t3 0 3 0 3 0" fill="none" stroke="#9aa0a8" stroke-width=".9"/><path d="M8 11.5q1.500-1.500 3 0t3 0 3 0 3 0" fill="none" stroke="#9aa0a8" stroke-width=".9"/><path d="M8 14.5q1.500-1.500 3 0t3 0 3 0 3 0" fill="none" stroke="#9aa0a8" stroke-width=".9"/></svg>
<svg style="left:1182.5px;top:1585.0px" width="29.0" height="24.0" viewBox="0 0 29 24"><path d="M5 0h22q2 0 2 2.500v1.500h-3v17H3z" fill="#efefef"/><path d="M0 20h24v1.500q0 2.500-2.500 2.500H2.500Q0 24 0 21.500z" fill="#d9dce0"/><path d="M8 5.5q1.500-1.500 3 0t3 0 3 0 3 0" fill="none" stroke="#9aa0a8" stroke-width=".9"/><path d="M8 8.5q1.500-1.500 3 0t3 0 3 0 3 0" fill="none" stroke="#9aa0a8" stroke-width=".9"/><path d="M8 11.5q1.500-1.500 3 0t3 0 3 0 3 0" fill="none" stroke="#9aa0a8" stroke-width=".9"/><path d="M8 14.5q1.500-1.500 3 0t3 0 3 0 3 0" fill="none" stroke="#9aa0a8" stroke-width=".9"/></svg>
<div style="position:absolute;left:3011.7px;top:0.0px;width:2.3px;height:1616.0px;background:#5b6b84;"></div>
</body></html>
